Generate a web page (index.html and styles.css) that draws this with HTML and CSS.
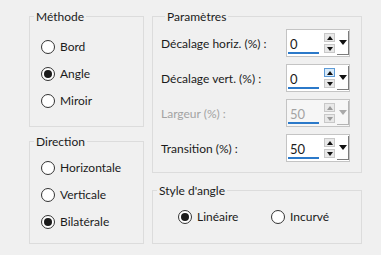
FILE: index.html
```html
<!DOCTYPE html>
<html>
<head>
  <link rel="stylesheet" href="styles.css">
  <title>Angle</title>
</head>
<body>
  <div class="dialog">
    <div class="col-left">
      <fieldset class="group method">
        <legend>Méthode</legend>
        <div class="radio"><span class="circle"></span>Bord</div>
        <div class="radio"><span class="circle on"></span>Angle</div>
        <div class="radio"><span class="circle"></span>Miroir</div>
      </fieldset>
      <fieldset class="group direction">
        <legend>Direction</legend>
        <div class="radio"><span class="circle"></span>Horizontale</div>
        <div class="radio"><span class="circle"></span>Verticale</div>
        <div class="radio"><span class="circle on"></span>Bilatérale</div>
      </fieldset>
    </div>

    <div class="col-right">
      <fieldset class="group params">
        <legend>Paramètres</legend>
        <div class="param">
          <span class="param-label">Décalage horiz. (%) :</span>
          <div class="spin">
            <span class="spin-value">0</span>
            <div class="spin-buttons">
              <span class="spin-btn up"></span>
              <span class="spin-btn down"></span>
            </div>
            <span class="spin-drop"></span>
          </div>
        </div>
        <div class="param">
          <span class="param-label">Décalage vert. (%) :</span>
          <div class="spin">
            <span class="spin-value">0</span>
            <div class="spin-buttons">
              <span class="spin-btn up hover"></span>
              <span class="spin-btn down"></span>
            </div>
            <span class="spin-drop"></span>
          </div>
        </div>
        <div class="param disabled">
          <span class="param-label">Largeur (%) :</span>
          <div class="spin">
            <span class="spin-value">50</span>
            <div class="spin-buttons">
              <span class="spin-btn up"></span>
              <span class="spin-btn down"></span>
            </div>
            <span class="spin-drop"></span>
          </div>
        </div>
        <div class="param">
          <span class="param-label">Transition (%) :</span>
          <div class="spin">
            <span class="spin-value">50</span>
            <div class="spin-buttons">
              <span class="spin-btn up"></span>
              <span class="spin-btn down"></span>
            </div>
            <span class="spin-drop"></span>
          </div>
        </div>
      </fieldset>

      <fieldset class="group style">
        <legend>Style d'angle</legend>
        <div class="style-row">
          <div class="radio first"><span class="circle on"></span>Linéaire</div>
          <div class="radio"><span class="circle"></span>Incurvé</div>
        </div>
      </fieldset>
    </div>
  </div>
</body>
</html>
```

FILE: styles.css
```css
:root {
  --bg: #f0f0f0;
  --line: #dcdcdc;
  --text: #1b1b1b;
  --muted: #a3a3a3;
  --accent: #2b79c9;
}

body {
  margin: 0;
  background: var(--bg);
  font-family: Lato, "Noto Sans", sans-serif;
  font-size: 12px;
  color: var(--text);
}

.dialog {
  display: flex;
  gap: 8px;
  padding: 9px 0 0 29px;
}

.col-left {
  width: 115px;
  display: flex;
  flex-direction: column;
  gap: 7px;
}

.col-right {
  width: 210px;
  display: flex;
  flex-direction: column;
  gap: 10px;
}

.group {
  margin: 0;
  padding: 0;
  min-width: 0;
  border: 1px solid var(--line);
}

.group legend {
  margin-left: 4px;
  padding: 0 2px;
  line-height: 15px;
}

/* radio buttons */
.radio {
  display: flex;
  align-items: center;
  height: 27px;
  padding-left: 11px;
}

.circle {
  box-sizing: border-box;
  width: 14px;
  height: 14px;
  margin-right: 5px;
  border: 1px solid #333;
  border-radius: 50%;
  background: white;
  display: flex;
  align-items: center;
  justify-content: center;
}

.circle.on::after {
  content: "";
  width: 8px;
  height: 8px;
  border-radius: 50%;
  background: #1a1a1a;
}

.method {
  padding: 9px 0 12px 0;
}

.direction {
  padding: 5px 0 8px 0;
}

/* parameters */
.params {
  padding: 5px 0 10px 8px;
  display: flex;
  flex-direction: column;
  gap: 7px;
}

.param {
  display: flex;
  align-items: center;
  height: 28px;
}

.param-label {
  width: 125px;
}

.param.disabled .param-label,
.param.disabled .spin-value {
  color: var(--muted);
}

.spin {
  box-sizing: border-box;
  position: relative;
  width: 64px;
  height: 28px;
  border: 1px solid #c4c4c4;
  background: white;
  display: flex;
  align-items: center;
}

.param.disabled .spin {
  background: #f6f6f6;
}

.spin::after {
  content: "";
  position: absolute;
  left: 1px;
  bottom: 2px;
  width: 31px;
  height: 2px;
  background: var(--accent);
}

.spin-value {
  width: 35px;
  padding-left: 3px;
  padding-top: 2px;
  font-size: 13px;
}

.spin-buttons {
  display: flex;
  flex-direction: column;
  gap: 2px;
}

.spin-btn {
  box-sizing: border-box;
  width: 11px;
  height: 9px;
  border: 1px solid #c8c8c8;
  background: #e8e8e8;
  display: flex;
  align-items: center;
  justify-content: center;
}

.spin-btn.hover {
  background: #d8eaf9;
  border-color: #5d9ad6;
}

.spin-btn.up::after {
  content: "";
  border-left: 3px solid transparent;
  border-right: 3px solid transparent;
  border-bottom: 4px solid #111;
}

.spin-btn.down::after {
  content: "";
  border-left: 3px solid transparent;
  border-right: 3px solid transparent;
  border-top: 4px solid #111;
}

.param.disabled .spin-btn.up::after {
  border-bottom-color: #9a9a9a;
}

.param.disabled .spin-btn.down::after {
  border-top-color: #9a9a9a;
}

.spin-drop {
  box-sizing: border-box;
  width: 12px;
  height: 24px;
  margin-left: 2px;
  border-right: 1px solid #7c7c7c;
  border-bottom: 1px solid #7c7c7c;
  display: flex;
  align-items: center;
  justify-content: center;
}

.spin-drop::after {
  content: "";
  border-left: 4px solid transparent;
  border-right: 4px solid transparent;
  border-top: 5px solid #111;
}

.param.disabled .spin-drop {
  border-color: #b4b4b4;
}

.param.disabled .spin-drop::after {
  border-top-color: #a8a8a8;
}

/* style d'angle */
.style {
  padding: 5px 0 13px 0;
}

.style-row {
  display: flex;
  padding-left: 14px;
}

.style-row .first {
  width: 82px;
}
```
